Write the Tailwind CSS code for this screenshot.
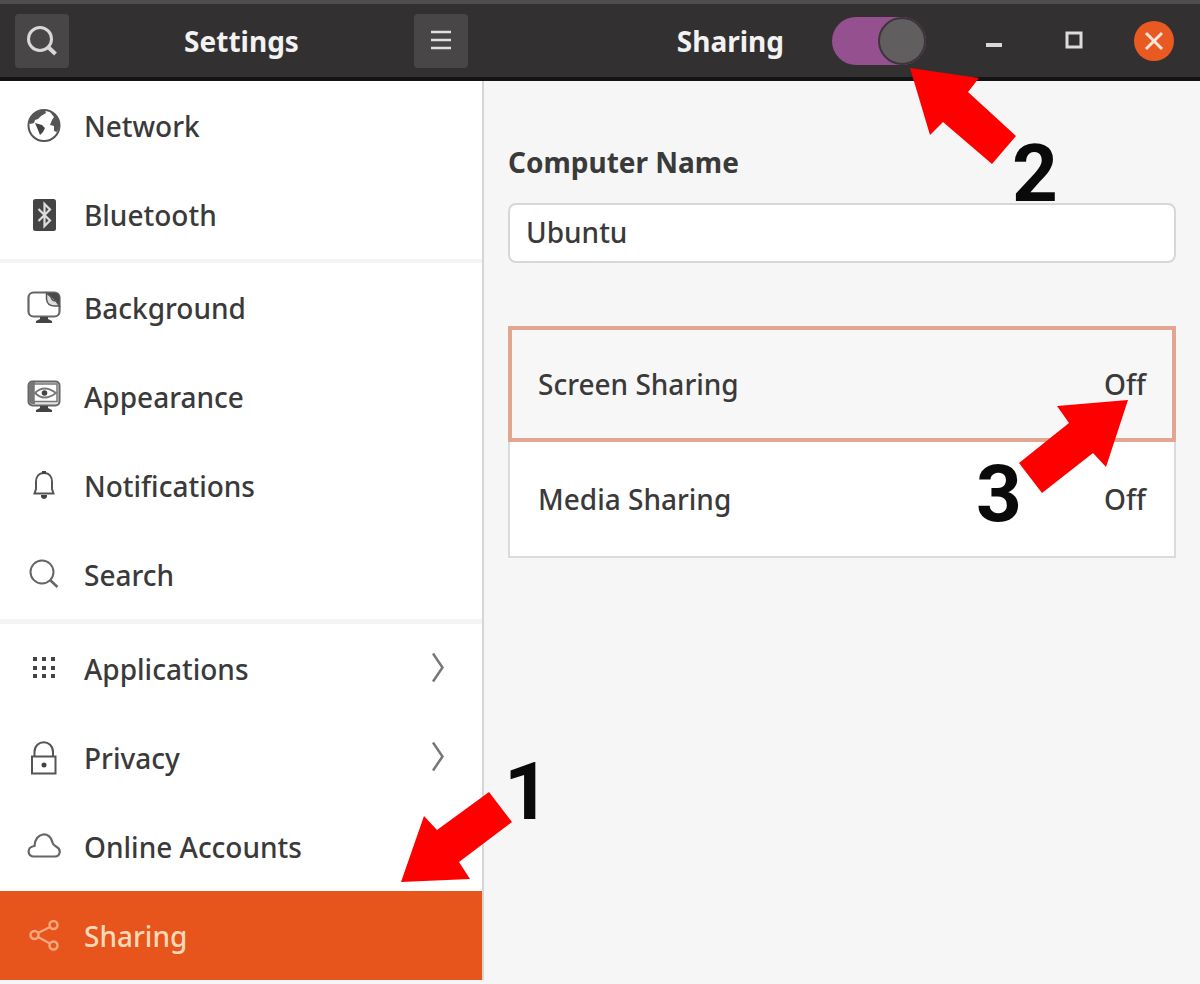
<!DOCTYPE html>
<html lang="en">

<head>
    <meta charset="UTF-8">
    <meta name="viewport" content="width=device-width, initial-scale=1.0">
    <title>Settings - Sharing</title>
    <script src="https://cdn.jsdelivr.net/npm/@tailwindcss/browser@4"></script>
</head>

<body class="min-h-screen flex flex-col bg-[#f6f6f6] font-['Noto_Sans',sans-serif] text-[28px] leading-9 font-medium text-[#3a3a3a]">
    <!-- Title bar -->
    <header class="relative z-20 flex h-[81px] shrink-0 bg-[#323030] border-t-4 border-t-[#4f4d4d] border-b-4 border-b-[#141313] text-[#f2f2f2]">
        <div class="w-[482px] shrink-0 flex items-center justify-between pl-[15px] pr-[14px]">
            <button type="button" aria-label="Search" class="size-[54px] rounded-sm bg-[#484646] flex items-center justify-center">
                <svg class="size-8" viewBox="0 0 32 32" fill="none" stroke="#d8d8d8" stroke-width="3">
                    <circle cx="14" cy="14" r="11.5" />
                    <path d="M22 22l7.500 7" stroke-width="4" />
                </svg>
            </button>
            <h1 class="font-bold">Settings</h1>
            <button type="button" aria-label="Menu" class="size-[54px] rounded-sm bg-[#484646] flex items-center justify-center">
                <svg class="size-6" viewBox="0 0 24 24" stroke="#e0e0e0" stroke-width="2.500">
                    <path d="M2 3h20M2 11h20M2 19h20" />
                </svg>
            </button>
        </div>
        <div class="flex-1 flex items-center justify-end gap-12 pr-[26px]">
            <label for="sharing-toggle" class="font-bold">Sharing</label>
            <div class="relative h-12 w-[94px]">
                <input type="checkbox" id="sharing-toggle" checked
                    class="block appearance-none h-12 w-[94px] rounded-full bg-[#95508f] before:block before:size-12 before:rounded-full before:bg-[#605e5e] before:border-2 before:border-[#3d343c] checked:before:ml-auto">
                <svg class="absolute left-[69px] top-11 w-[160px] h-[150px] overflow-visible pointer-events-none" viewBox="900 60 160 150">
                    <path d="M909 67L978 77L967 91L1015 135L991 163L942 121L929 134Z" fill="#fe0000" />
                    <text x="1011" y="200" class="font-['Roboto',sans-serif] font-bold text-[80px] leading-none" fill="#0a0a0a">2</text>
                </svg>
            </div>
            <div class="flex items-center gap-10">
                <button type="button" aria-label="Minimize" class="size-10 flex items-center justify-center">
                    <svg class="size-6" viewBox="0 0 24 24"><path d="M4 14h16v4H4z" fill="#d8d8d8" /></svg>
                </button>
                <button type="button" aria-label="Maximize" class="size-10 flex items-center justify-center">
                    <svg class="size-6" viewBox="0 0 24 24" fill="none" stroke="#dcdcdc" stroke-width="3"><path d="M5 4h14v14H5z" /></svg>
                </button>
                <button type="button" aria-label="Close" class="size-10 rounded-full bg-[#e95a22] flex items-center justify-center">
                    <svg class="size-6" viewBox="0 0 24 24" stroke="#fbe6dc" stroke-width="3"><path d="M4 4l16 16M20 4L4 20" /></svg>
                </button>
            </div>
        </div>
    </header>

    <div class="flex-1 flex">
        <!-- Sidebar -->
        <nav class="w-[484px] shrink-0 pb-1">
            <div class="h-full bg-white border-r-2 border-[#d5d5d5]">
                <ul>
                    <li>
                        <a href="#" class="h-[89px] flex items-center gap-[23px] pl-[27px]">
                            <svg class="size-[34px]" viewBox="0 0 34 34">
                                <circle cx="17" cy="16.500" r="15.500" fill="none" stroke="#555" stroke-width="2" />
                                <path d="M2 13C4 6 10 1.500 18 1.500L19 4L14 7L11 10L8 11L7 14L3 15Z" fill="#555" />
                                <path d="M8 14L15 16L18 19L16 23L13 26L11 21Z" fill="#444" />
                                <path d="M23 3C29 5 33 11 32 18L30 23L27 22L27 17L23 16L25 11L27 8Z" fill="#555" />
                            </svg>
                            Network
                        </a>
                    </li>
                    <li>
                        <a href="#" class="h-[89px] flex items-center gap-[23px] pl-[27px]">
                            <svg class="size-[34px]" viewBox="0 0 34 34">
                                <rect x="6" y="1" width="23" height="32" rx="2.500" fill="#444" />
                                <path d="M11.500 11L23 22.500L17.500 28V6L23 11.500L11.500 23" fill="none" stroke="#ddd" stroke-width="2.200" />
                            </svg>
                            Bluetooth
                        </a>
                    </li>
                </ul>
                <hr class="border-t-4 border-[#f4f4f4]">
                <ul>
                    <li>
                        <a href="#" class="h-[89px] flex items-center gap-[23px] pl-[27px]">
                            <svg class="size-[34px]" viewBox="0 0 34 34">
                                <rect x="1.500" y="1.500" width="31" height="24" rx="5" fill="none" stroke="#666" stroke-width="2.200" />
                                <path d="M20 2H28Q32.500 2 32.500 7V14Z" fill="#4a4a4a" />
                                <path d="M19.500 2V8Q20 15 28 15H32.500L29 10Q25 10 24 6Z" fill="#ddd" stroke="#555" stroke-width="1.500" />
                                <path d="M13 26H21V28L25 30V32H9V30L13 28Z" fill="#444" />
                            </svg>
                            Background
                        </a>
                    </li>
                    <li>
                        <a href="#" class="h-[89px] flex items-center gap-[23px] pl-[27px]">
                            <svg class="size-[34px]" viewBox="0 0 34 34">
                                <rect x="1.500" y="1.500" width="31" height="24" rx="4" fill="#e4e4e4" stroke="#666" stroke-width="2" />
                                <path d="M2 5Q2 2 6 2H8V24H5Q2 24 2 20Z" fill="#777" />
                                <rect x="7" y="4" width="23" height="17.500" fill="#fff" stroke="#777" stroke-width="1.500" />
                                <path d="M8 13Q17 4 29 13Q17 22 8 13Z" fill="none" stroke="#777" stroke-width="1.800" />
                                <circle cx="17.500" cy="13" r="2.800" fill="#444" />
                                <path d="M13 26H21V28L25 30V32H9V30L13 28Z" fill="#444" />
                            </svg>
                            Appearance
                        </a>
                    </li>
                    <li>
                        <a href="#" class="h-[89px] flex items-center gap-[23px] pl-[27px]">
                            <svg class="size-[34px]" viewBox="0 0 34 34">
                                <path d="M17 4C11.500 4 9 8 9 13V20L7.500 24.500H26.500L25 20V13C25 8 22.500 4 17 4Z" fill="none" stroke="#555" stroke-width="2" />
                                <path d="M15 2H19V5H15ZM14 26H20V28Q19 30 17 30Q15 30 14 28Z" fill="#444" />
                            </svg>
                            Notifications
                        </a>
                    </li>
                    <li>
                        <a href="#" class="h-[89px] flex items-center gap-[23px] pl-[27px]">
                            <svg class="size-[34px]" viewBox="0 0 34 34" fill="none" stroke="#666" stroke-width="2">
                                <circle cx="15" cy="14" r="11.500" />
                                <path d="M23 22L30.500 29" stroke-width="2.500" />
                            </svg>
                            Search
                        </a>
                    </li>
                </ul>
                <hr class="border-t-5 border-[#f4f4f4]">
                <ul>
                    <li>
                        <a href="#" class="h-[89px] flex items-center gap-[23px] pl-[27px] pr-[34px]">
                            <svg class="size-[34px]" viewBox="0 0 34 34" fill="#444">
                                <path d="M6 5h4v4H6zM15 5h4v4h-4zM24 5h4v4h-4zM6 14h4v4H6zM15 14h4v4h-4zM24 14h4v4h-4zM6 22h4v4H6zM15 22h4v4h-4zM24 22h4v4h-4z" />
                            </svg>
                            <span class="flex-1">Applications</span>
                            <svg class="w-5 h-8" viewBox="0 0 20 32" fill="none" stroke="#777" stroke-width="2.500"><path d="M5 0.500L14.500 14.500L5 28.500" /></svg>
                        </a>
                    </li>
                    <li>
                        <a href="#" class="h-[89px] flex items-center gap-[23px] pl-[27px] pr-[34px]">
                            <svg class="size-[34px]" viewBox="0 0 34 34" fill="none" stroke="#555" stroke-width="2">
                                <path d="M5 15.500H28.500V32.500H5Z" />
                                <path d="M7.500 15V11C7.500 -2 26 -2 26 11V15" />
                                <circle cx="17" cy="24" r="2.500" fill="#444" stroke="none" />
                            </svg>
                            <span class="flex-1">Privacy</span>
                            <svg class="w-5 h-8" viewBox="0 0 20 32" fill="none" stroke="#777" stroke-width="2.500"><path d="M5 0.500L14.500 14.500L5 28.500" /></svg>
                        </a>
                    </li>
                    <li>
                        <a href="#" class="h-[89px] flex items-center gap-[23px] pl-[27px]">
                            <svg class="size-[34px]" viewBox="0 0 34 34" fill="none" stroke="#666" stroke-width="2.200">
                                <path d="M7 26.500C-0.500 26.500 0 16.500 7.500 16C8 1.500 23.500 1 25.500 12.500C26 15 27 15.500 29 16.500C35 19.500 33 26.500 28 26.500Z" />
                            </svg>
                            Online Accounts
                        </a>
                    </li>
                    <li class="relative z-10">
                        <a href="#" aria-current="page" class="h-[89px] flex items-center gap-[23px] pl-[27px] bg-[#e7541c] text-[#ffd9b8]">
                            <svg class="size-[34px]" viewBox="0 0 34 34" fill="none" stroke="#f9a67c" stroke-width="2.500">
                                <circle cx="7.500" cy="16" r="4" />
                                <circle cx="26.500" cy="6" r="4" />
                                <circle cx="26.500" cy="26.500" r="4" />
                                <path d="M11 14L23 8M11 18L23 24.500" />
                            </svg>
                            Sharing
                        </a>
                        <svg class="absolute -right-[60px] bottom-full w-[142px] h-[135px] overflow-visible pointer-events-none" viewBox="400 756 142 135">
                            <path d="M401 882L424 816L437 830L489 792L512 822L459 862L470 879Z" fill="#fe0000" />
                            <text x="504" y="819" class="font-['Roboto',sans-serif] font-bold text-[80px] leading-none" fill="#0a0a0a">1</text>
                        </svg>
                    </li>
                </ul>
            </div>
        </nav>

        <!-- Sharing panel -->
        <main class="flex-1 px-6 pt-[63px]">
            <label for="computer-name" class="block font-bold">Computer Name</label>
            <input type="text" id="computer-name" value="Ubuntu"
                class="block w-full h-[60px] mt-[23px] px-4 pb-0.5 bg-white border-2 border-[#d6d8d8] rounded-lg">

            <div class="mt-[63px] bg-white">
                <button type="button" class="relative w-full h-[116px] px-[26px] flex items-center justify-between bg-[#f6f7f6] border-4 border-[#e0a68f]">
                    <span>Screen Sharing</span>
                    <span>Off</span>
                    <svg class="absolute -right-1 top-[66px] w-[206px] h-[140px] overflow-visible pointer-events-none" viewBox="970 396 206 140">
                        <path d="M1128 400L1057 406L1069 423L1019 463L1042 493L1093 453L1106 467Z" fill="#fe0000" />
                        <text x="976" y="521" class="font-['Roboto',sans-serif] font-bold text-[80px] leading-none" fill="#0a0a0a">3</text>
                    </svg>
                </button>
                <button type="button" class="w-full h-[116px] px-7 flex items-center justify-between border-2 border-t-0 border-[#dadcdc]">
                    <span>Media Sharing</span>
                    <span>Off</span>
                </button>
            </div>
        </main>
    </div>
</body>

</html>
